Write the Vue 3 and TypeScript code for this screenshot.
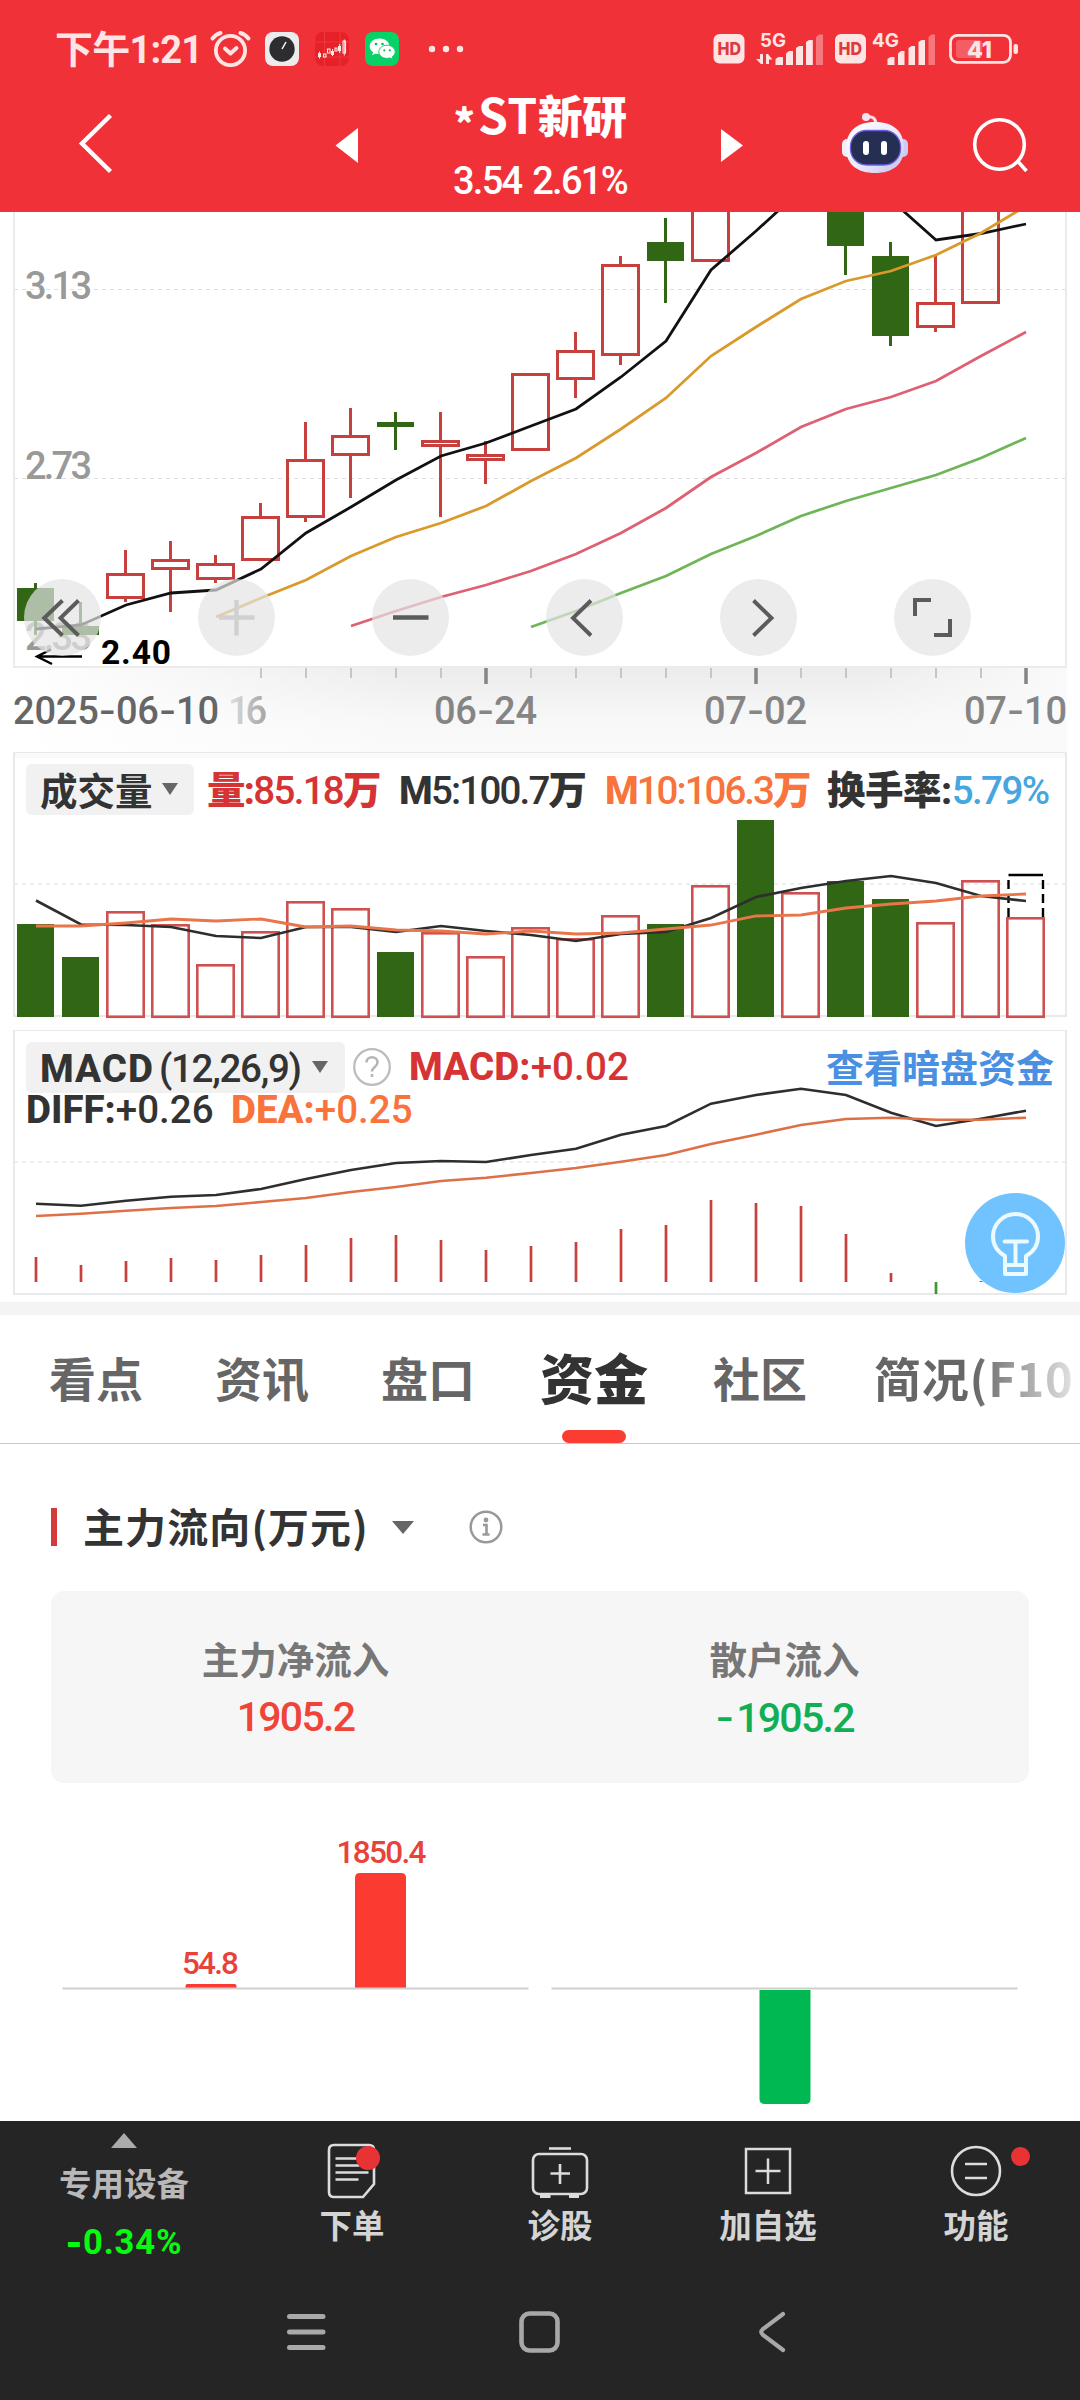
<script setup lang="ts">
interface Candle { i: number; up: boolean; high: number; top: number; bottom: number; low: number }
interface Label { t: string; x: number; y: number; w: number; fill: string }

const cx = (i: number): number => 35.5 + 45 * i
const line = (ys: number[], from = 0): string =>
  ys.map((y, k) => `${cx(from + k) + 0.5},${y}`).join(' ')
const parts = (t: string): string[] => t.split(/([-+])/).filter((p) => p.length > 0)

const candleRows: [number, number, number, number, number, number][] = [
  [0, 0, 583, 588, 621, 635], [1, 0, 602, 626, 635, 635], [2, 1, 550, 573, 599, 602],
  [3, 1, 541, 559, 570, 612], [4, 1, 555, 563, 580, 583], [5, 1, 503, 516, 561, 561],
  [6, 1, 422, 459, 518, 522], [7, 1, 408, 435, 456, 498], [8, 0, 412, 422, 427, 450],
  [9, 1, 412, 440, 447, 517], [10, 1, 441, 454, 461, 484], [11, 1, 373, 373, 451, 451],
  [12, 1, 332, 350, 380, 398], [13, 1, 256, 264, 356, 365], [14, 0, 218, 242, 261, 303],
  [15, 1, 200, 200, 262, 262], [18, 0, 200, 200, 246, 275], [19, 0, 242, 256, 336, 346],
  [20, 1, 256, 302, 328, 332], [21, 1, 200, 200, 304, 304],
]
const candles: Candle[] = candleRows.map(([i, up, high, top, bottom, low]) => ({ i, up: up === 1, high, top, bottom, low }))

const priceLines = [
  { color: '#111111', pts: line([629, 625, 605, 593, 590, 569, 533, 507, 480, 456, 443, 426, 409, 377, 341, 270, 231, 190, 170, 200, 240, 233.5, 224]) },
  { color: '#d99a2b', pts: line([617, 598, 580, 556, 537, 523, 506, 481, 458, 429, 398, 356, 327, 299, 281, 271, 255, 233, 206], 4) },
  { color: '#dd6173', pts: line([626, 611, 597, 585, 571, 554, 533, 508, 477, 453, 427, 409, 397, 381, 356, 332], 7) },
  { color: '#6fb557', pts: line([627, 611, 593, 576, 554, 536, 516, 501, 488, 475, 458, 438], 11) },
]
const minorTicks: number[] = Array.from({ length: 17 }, (_, k) => k + 5).filter((i) => i !== 10 && i !== 16)
const majorTicks: number[] = [10, 16, 22]
const priceLabels: Label[] = [
  { t: '3.13', x: 25, y: 299, w: 67, fill: '#999' },
  { t: '2.73', x: 25, y: 479, w: 67, fill: '#999' },
  { t: '2.33', x: 25, y: 650, w: 67, fill: '#999' },
]
const dates: Label[] = [
  { t: '2025-06-10', x: 13, y: 724, w: 206, fill: '#666' },
  { t: '16', x: 228, y: 724, w: 39, fill: 'url(#fadeDate)' },
  { t: '06-24', x: 434, y: 724, w: 103, fill: '#858585' },
  { t: '07-02', x: 704, y: 724, w: 103, fill: '#858585' },
  { t: '07-10', x: 964, y: 724, w: 103, fill: '#858585' },
]

const volTops: number[] = [924, 957, 911, 924, 964, 931, 901, 908, 952, 932, 956, 927, 938, 915, 924, 885, 820, 892, 881, 899, 922, 880, 917]
const downDays = new Set<number>([0, 1, 8, 14, 16, 18, 19])
const volBars = volTops.map((top, i) => ({ i, top, up: !downDays.has(i) }))
const volMa5 = line([900.5, 924.5, 925, 927, 936, 938, 927, 927, 932, 926, 931, 935, 941, 934, 932, 918, 897, 888, 881, 876, 883, 896, 901])
const volMa10 = line([926, 926, 923, 919, 921, 919, 927, 926, 930, 931, 934, 931, 934, 933, 929, 925, 916, 915, 908, 904, 901, 896, 894])

const diff = line([1203.7, 1205.7, 1200.7, 1196.7, 1195, 1189, 1179, 1170, 1163, 1161, 1162, 1155, 1148.7, 1134.7, 1126, 1103.7, 1095, 1088.7, 1095, 1112.7, 1126, 1118.7, 1110.7])
const dea = line([1216, 1213.7, 1210.7, 1208, 1206, 1202, 1198, 1192, 1187, 1181, 1177.7, 1173, 1168, 1161.7, 1155, 1144, 1134.7, 1125, 1119, 1117.7, 1119.7, 1119.7, 1117.7])
const macd: number[] = [1257, 1265, 1261, 1258, 1260, 1255, 1245, 1238, 1235, 1240, 1250, 1246, 1242, 1229, 1225, 1200, 1203, 1206, 1234, 1273, 1294, 1281, 1275]

const tabs = [
  { name: '看点', on: false }, { name: '资讯', on: false }, { name: '盘口', on: false },
  { name: '资金', on: true }, { name: '社区', on: false }, { name: '简况(F10', on: false },
]
</script>

<template>
  <div class="page">
    <header class="top">
      <div class="status">
        <span class="clock">下午1:21</span>
        <svg class="left-icons" width="270" height="80" viewBox="204 0 270 80">
          <g fill="none" stroke="#ffe4e4" stroke-linecap="round">
            <circle cx="230.500" cy="50.500" r="14.600" stroke-width="3.800" />
            <path d="M225 48.500l5.500 5 6-5.500" stroke-width="4" stroke-linejoin="round" />
            <path d="M212.500 38.500q3-4 8-5.500M248.500 38.500q-3-4-8-5.500" stroke-width="4" />
          </g>
          <rect x="265" y="32" width="34" height="34" rx="8" fill="#ececec" />
          <circle cx="282" cy="49" r="12.700" fill="#2d2d30" />
          <path d="M282 49l4-7" stroke="#fff" stroke-width="1.500" />
          <rect x="315" y="32" width="34" height="34" rx="8" fill="#e62228" />
          <path d="M324.500 32v34M340 32v34M315 42h34M315 57h34" stroke="#f04a4c" stroke-width=".6" />
          <g fill="#ffe8e8">
            <path d="M318 53h3v4h-3zM331 51h3v4h-3zM338 46h3v5h-3z" />
            <path d="M323.500 54h2.500v3h-2.500zM327.500 49h2.500v4h-2.500zM335 48h2v3h-2zM343 41h2.500v12H343z" fill="none" stroke="#ffe8e8" stroke-width="1.100" />
            <path d="M319 51.500h1v7h-1zM332 49h1v7h-1zM339.200 44h1v9h-1zM343.800 39.500h1v16h-1z" />
          </g>
          <rect x="365" y="32" width="34" height="34" rx="8" fill="#08d168" />
          <path d="M379.500 38.500c-5.600 0-9.800 3.500-9.800 7.800 0 2.500 1.400 4.600 3.400 6l-1 3 3.600-1.800c1.200.4 2.500.6 3.800.6 5.600 0 9.900-3.300 9.900-7.800s-4.300-7.800-9.900-7.800z" fill="#fff" />
          <path d="M387 45.200c-4.500 0-8.200 2.900-8.200 6.600s3.700 6.600 8.200 6.600c1 0 2-.2 3-.5l3 1.600-.8-2.600c1.800-1.200 3-3 3-5.100 0-3.700-3.700-6.600-8.200-6.600z" fill="#fff" stroke="#08d168" stroke-width="1" />
          <g fill="#08b75c"><circle cx="376" cy="44" r="1.300" /><circle cx="382.500" cy="44" r="1.300" /><circle cx="384.300" cy="50.300" r="1.100" /><circle cx="389.800" cy="50.300" r="1.100" /></g>
          <g fill="#ffe4e4"><circle cx="432" cy="49" r="3.200" /><circle cx="446" cy="49" r="3.200" /><circle cx="460" cy="49" r="3.200" /></g>
        </svg>
        <svg class="right-icons" width="320" height="80" viewBox="704 0 320 80" font-family="Inter, sans-serif" font-weight="700">
          <g fill="#ffe4e4">
            <rect x="713.500" y="34" width="31" height="29.500" rx="6" />
            <rect x="835" y="34" width="31" height="29.500" rx="6" />
            <text x="760" y="47" font-size="19" textLength="26" lengthAdjust="spacingAndGlyphs">5G</text>
            <text x="872" y="47" font-size="19" textLength="27" lengthAdjust="spacingAndGlyphs">4G</text>
            <path d="M760 54h3v10h-2l-5-5h4zM766 54h2l4.500 5.500H769V64h-3z" />
            <path d="M775.500 59l3-2h4.500v8h-7.500zM786 53.500l3-2.500h4v14h-7zM796 48l3-2h4v19h-7zM806 42l3-2h3.800v25H806z" />
            <path d="M887.500 59l3-2h4v8h-7zM898 53.500l3-2.500h3.500v14H898zM908.500 48l3-2h3.500v19h-6.500zM918.500 42l3-2h3.500v25h-6.500z" />
            <path d="M816 37l3-2.500h4V65h-7zM928.500 37l3-2.500h3.500V65h-6.500z" opacity=".4" />
            <rect x="956" y="40" width="26" height="18" rx="3" opacity=".25" />
            <rect x="1013.500" y="44" width="4.500" height="10" rx="2" />
            <text x="967" y="57.500" font-size="23" font-weight="800" textLength="25" lengthAdjust="spacingAndGlyphs">41</text>
          </g>
          <rect x="950.500" y="35.300" width="60" height="27" rx="7" fill="none" stroke="#ffe4e4" stroke-width="2.800" />
          <g fill="#dd3b40" font-size="17" font-weight="800"><text x="717.500" y="55" textLength="23.500" lengthAdjust="spacingAndGlyphs">HD</text><text x="838.500" y="55" textLength="23.500" lengthAdjust="spacingAndGlyphs">HD</text></g>
        </svg>
      </div>
      <div class="title-row">
        <svg width="80" height="132" viewBox="60 80 80 132"><path d="M110.500 115.500L82 143.500l28.500 28" fill="none" stroke="#fff" stroke-width="4.400" /></svg>
        <svg width="50" height="132" viewBox="325 80 50 132"><path d="M335.500 145.500L358 128v35z" fill="#fff" /></svg>
        <div class="title">
          <h1><span class="star">*</span><span class="latin">ST</span>新研</h1>
          <p>3.54 2.61%</p>
        </div>
        <svg width="50" height="132" viewBox="705 80 50 132"><path d="M743 145.500L721 129v33z" fill="#fff" /></svg>
        <svg width="80" height="132" viewBox="835 80 80 132">
          <defs><linearGradient id="shell" x1="0" y1="0" x2="1" y2="1"><stop offset="0" stop-color="#ffffff" /><stop offset=".55" stop-color="#ece9fb" /><stop offset="1" stop-color="#bfc0ee" /></linearGradient></defs>
          <path d="M866 117q10-2 10 8" fill="none" stroke="#f5dfee" stroke-width="3" /><circle cx="866" cy="117" r="4" fill="#f3e4f4" />
          <rect x="842" y="139" width="10" height="18" rx="5" fill="#eeeefc" /><rect x="898" y="139" width="10" height="18" rx="5" fill="#c9cdf5" />
          <path d="M875 122c19 0 29 10 29 26 0 17-12 25-29 25s-29-8-29-25c0-16 10-26 29-26z" fill="url(#shell)" />
          <rect x="850.500" y="130.500" width="50" height="34.500" rx="16" fill="#252f54" stroke="#6e5fe0" stroke-width="1.300" />
          <rect x="863" y="141" width="6" height="14" rx="3" fill="#fff" /><rect x="881" y="141" width="6" height="14" rx="3" fill="#fff" />
        </svg>
        <svg width="70" height="132" viewBox="965 80 70 132"><g fill="none" stroke="#fff" stroke-width="3.600"><circle cx="999.500" cy="144.500" r="24.800" /><path d="M1017 160.500l9.500 10.500" /></g></svg>
      </div>
    </header>

    <section class="price">
      <svg width="1080" height="540" viewBox="0 212 1080 540">
        <defs>
          <linearGradient id="axis" x1="0" y1="0" x2="0" y2="1"><stop offset="0" stop-color="#ececec" /><stop offset=".65" stop-color="#f8f8f8" /><stop offset="1" stop-color="#fafafa" /></linearGradient>
          <linearGradient id="axisFade" x1="0" y1="0" x2="1" y2="0"><stop offset="0" stop-color="#fff" /><stop offset="1" stop-color="#fff" stop-opacity="0" /></linearGradient>
          <linearGradient id="axisFadeRight" x1="0" y1="0" x2="1" y2="0"><stop offset="0" stop-color="#fafafa" stop-opacity="0" /><stop offset="1" stop-color="#fafafa" /></linearGradient>
          <linearGradient id="fadeDate" x1="0" y1="0" x2="1" y2="0"><stop offset="0" stop-color="#e0e0e0" /><stop offset="1" stop-color="#a4a4a4" /></linearGradient>
        </defs>
        <rect x="15" y="668" width="1052" height="84" fill="url(#axis)" />
        <rect x="13" y="668" width="400" height="84" fill="url(#axisFade)" />
        <rect x="867" y="668" width="200" height="84" fill="url(#axisFadeRight)" />
        <path d="M14 289.500h1052M14 478.500h1052" stroke="#dedede" stroke-width="1.200" stroke-dasharray="4 4" />
        <path d="M14 212v455h1052V212" fill="none" stroke="#ebebeb" stroke-width="2" />
        <g font-family="Roboto, sans-serif" font-size="38" font-weight="500">
          <text v-for="l in priceLabels" :key="l.t" :x="l.x" :y="l.y" :fill="l.fill" :textLength="l.w">{{ l.t }}</text>
          <text v-for="l in dates" :key="l.t" :x="l.x" :y="l.y" :fill="l.fill" :textLength="l.w"><tspan v-for="(p, k) in parts(l.t)" :key="k" :class="{ dash: p === '-' }">{{ p }}</tspan></text>
        </g>
        <g v-for="c in candles" :key="c.i">
          <template v-if="c.up">
            <path :d="`M${cx(c.i)} ${c.high}V${c.top}M${cx(c.i)} ${c.bottom}V${c.low}`" stroke="#c8403e" stroke-width="3" />
            <rect :x="cx(c.i) - 18" :y="c.top + 1.5" width="36" :height="c.bottom - c.top - 3" fill="none" stroke="#c8403e" stroke-width="3" />
          </template>
          <template v-else>
            <path :d="`M${cx(c.i)} ${c.high}V${c.low}`" stroke="#316615" stroke-width="3" />
            <rect :x="cx(c.i) - 18.5" :y="c.top" width="37" :height="c.bottom - c.top" fill="#316615" />
          </template>
        </g>
        <polyline v-for="l in priceLines" :key="l.color" :points="l.pts" fill="none" :stroke="l.color" stroke-width="2.800" />
        <path d="M82 656.500H37M51 649.500l-14 7 15 7.500" fill="none" stroke="#000" stroke-width="2.400" />
        <text x="101" y="664" font-family="Roboto, sans-serif" font-size="33.500" font-weight="700" textLength="70">2.40</text>
        <path v-for="i in minorTicks" :key="i" :d="`M${cx(i) + 0.5} 668v10`" stroke="#c6c6c6" stroke-width="2" />
        <path v-for="i in majorTicks" :key="i" :d="`M${cx(i) + 0.5} 668v16`" stroke="#858585" stroke-width="3.500" />
      </svg>
      <div class="tools">
        <button><svg viewBox="24 579 77 77"><path d="M62.500 600.500l-18.300 17.500 18.300 17.500M78.500 600.500L60.500 618l18 17.500" /></svg></button>
        <button class="off"><svg viewBox="198 579 77 77"><path d="M219 617.500h35.500M236.500 600v35.500" /></svg></button>
        <button><svg viewBox="372 579 77 77"><path d="M393 617.500h35.500" stroke-width="4.500" /></svg></button>
        <button><svg viewBox="546 579 77 77"><path d="M591 600.500L573 618l18 17.500" /></svg></button>
        <button><svg viewBox="720 579 77 77"><path d="M753.500 600.500l18 17.500-18 17.500" /></svg></button>
        <button><svg viewBox="894 579 77 77"><path d="M915 616v-16h16M934 635h16v-16" stroke-width="4" /></svg></button>
      </div>
    </section>

    <section class="panel vol">
      <svg class="plot" width="1080" height="278" viewBox="0 752 1080 278">
        <rect x="15" y="752" width="1052" height="6" fill="#fafafa" />
        <path d="M14 884h1052" stroke="#e9e9e9" stroke-width="1.700" stroke-dasharray="4 4" />
        <rect x="14" y="752" width="1052" height="264" fill="none" stroke="#e9e9e9" stroke-width="2" />
        <g v-for="b in volBars" :key="b.i">
          <rect v-if="b.up" :x="cx(b.i) - 18.2" :y="b.top + 1.3" width="36.400" :height="1015.5 - b.top" fill="none" stroke="#cf5050" stroke-width="2.600" />
          <rect v-else :x="cx(b.i) - 18.5" :y="b.top" width="37" :height="1017 - b.top" fill="#316615" />
        </g>
        <path d="M1008.500 917v-42M1043 917v-42" fill="none" stroke="#000" stroke-width="2.400" stroke-dasharray="9 5" />
        <path d="M1008.500 875H1043" stroke="#000" stroke-width="2.400" />
        <polyline :points="volMa5" fill="none" stroke="#2e2e2e" stroke-width="2.600" />
        <polyline :points="volMa10" fill="none" stroke="#e9764a" stroke-width="2.800" />
      </svg>
      <div class="legend">
        <span class="pill cn p1">成交量<i class="caret"></i></span>
        <span class="v1 red"><b>量:</b>85.18<b>万</b></span>
        <span class="v2"><b>M</b>5:100.7<b>万</b></span>
        <span class="v3 orange"><b>M</b>10:106.3<b>万</b></span>
        <span class="v4"><b>换手率:</b><em>5.79%</em></span>
      </div>
    </section>

    <section class="panel macd">
      <svg class="plot" width="1080" height="272" viewBox="0 1030 1080 272">
        <path d="M14 1162h1052" stroke="#e9e9e9" stroke-width="1.700" stroke-dasharray="4 4" />
        <rect x="14" y="1030" width="1052" height="264" fill="none" stroke="#e9e9e9" stroke-width="2" />
        <path v-for="(y, i) in macd" :key="i" :d="`M${cx(i) + 0.5} 1282V${y}`" :stroke="i === 20 ? '#3c9a32' : '#c8403e'" stroke-width="2.700" />
        <polyline :points="diff" fill="none" stroke="#2e2e2e" stroke-width="2.600" />
        <polyline :points="dea" fill="none" stroke="#de7048" stroke-width="2.600" />
      </svg>
      <div class="legend">
        <span class="pill p2"><b>MACD</b><span class="args">(12,26,9)</span><i class="caret"></i></span>
        <svg class="help" width="40" height="40" viewBox="0 0 40 40"><circle cx="20" cy="20" r="17.800" fill="none" stroke="#bdbdbd" stroke-width="2.300" /><path d="M14.500 15.500c0-7 11-7 11 0 0 4.500-5.500 4.500-5.500 9M20 27v3" fill="none" stroke="#b5b5b5" stroke-width="2.500" /></svg>
        <span class="m1 red"><b>MACD:</b>+0.02</span>
        <a class="dark">查看暗盘资金</a>
      </div>
      <div class="legend second">
        <span class="d1"><b>DIFF:</b>+0.26</span>
        <span class="d2 orange"><b>DEA:</b>+0.25</span>
      </div>
      <svg class="bulb" width="100" height="100" viewBox="965 1193 100 100">
        <circle cx="1015" cy="1243" r="50" fill="#6ec2ff" />
        <g fill="none" stroke="#eafaff" stroke-width="4" stroke-linejoin="round" stroke-linecap="round">
          <path d="M1005 1274v-18q-12-7-12-19.500a22.500 22.500 0 0 1 45 0q0 12.500-12 19.500v18z" /><path d="M1004.500 1241.500h22.500M1015.500 1241.500v23M1005 1265h21" />
        </g>
      </svg>
    </section>

    <div class="divider"></div>
    <nav class="tabs"><span v-for="t in tabs" :key="t.name" :class="{ on: t.on }">{{ t.name }}</span></nav>

    <main class="flow">
      <div class="heading">
        <i class="mark"></i><h2>主力流向(万元)</h2><i class="caret big"></i>
        <svg width="36" height="36" viewBox="0 0 36 36"><circle cx="18" cy="18" r="15.300" fill="none" stroke="#999" stroke-width="2.500" /><circle cx="18" cy="11" r="2.400" fill="#999" /><path d="M15 16h3.500v9.500M14.500 25.500h7" fill="none" stroke="#999" stroke-width="2.600" /></svg>
      </div>
      <div class="card">
        <div><span>主力净流入</span><strong class="up">1905.2</strong></div>
        <div><span>散户流入</span><strong class="down"><span class="dash">-</span>1905.2</strong></div>
      </div>
      <svg class="bars" width="1080" height="338" viewBox="0 1783 1080 338" font-family="Roboto, sans-serif" font-size="31.500" font-weight="500" fill="#e8433a">
        <text x="336.500" y="1863" textLength="90">1850.4</text>
        <text x="182" y="1974" textLength="57">54.8</text>
        <path d="M355 1988v-110q0-5 5-5h41q5 0 5 5v110zM185.500 1988v-2q0-2 2-2h47q2 0 2 2v2z" fill="#fb3b31" />
        <path d="M62.500 1988.500h466M551.500 1988.500h466" stroke="#cfcfcf" stroke-width="2" />
        <path d="M759.500 1990h51v109q0 5-5 5h-41q-5 0-5-5z" fill="#00b852" />
      </svg>
    </main>

    <footer>
      <div class="actions">
        <div class="sector">
          <i class="tri"></i><span>专用设备</span><strong><b class="dash">-</b>0.34%</strong>
        </div>
        <div class="act">
          <svg width="80" height="70" viewBox="312 2136 80 70"><g fill="none" stroke="#dcdcdc" stroke-width="2.600"><path d="M334 2145h35q5 0 5 5v34l-11 13h-29q-5 0-5-5v-42q0-5 5-5z" /><path d="M335.500 2158.500h22M335.500 2165.500h24M335.500 2172.500h33M335.500 2179.500h23" /></g><circle cx="368" cy="2158" r="12" fill="#e83334" /></svg>
          <span>下单</span>
        </div>
        <div class="act">
          <svg width="80" height="70" viewBox="520 2136 80 70"><g fill="none" stroke="#dcdcdc" stroke-width="2.600"><rect x="533" y="2154" width="54" height="40" rx="6" /><path d="M549 2148.500h22" /><path d="M540 2196h10.500M569 2196h10" stroke-width="4" /><path d="M560 2164v20M550.500 2173.500h19.500" /></g></svg>
          <span>诊股</span>
        </div>
        <div class="act">
          <svg width="80" height="70" viewBox="728 2136 80 70"><g fill="none" stroke="#dcdcdc" stroke-width="2.500"><rect x="746" y="2149" width="44" height="44" /><path d="M768 2158.500v25.500M755.500 2171h25" /></g></svg>
          <span>加自选</span>
        </div>
        <div class="act">
          <svg width="92" height="70" viewBox="930 2136 92 70"><g fill="none" stroke="#dcdcdc" stroke-width="2.600"><circle cx="976" cy="2171" r="24" /><path d="M965 2164h22M965 2178h22" /></g></svg>
          <span>功能</span><i class="dot"></i>
        </div>
      </div>
      <svg class="sysnav" width="1080" height="136" viewBox="0 2264 1080 136"><g fill="none" stroke="#a8a8a8" stroke-linecap="round" stroke-linejoin="round"><path d="M289.500 2316.500h33.500M289.500 2332h33.500M289.500 2347.500h33.500" stroke-width="5" /><rect x="521.500" y="2313.500" width="36" height="37" rx="8" stroke-width="4.600" /><path d="M783 2314l-20 15q-3.500 3 0 6l20 15" stroke-width="4.200" /></g></svg>
    </footer>
  </div>
</template>

<style>
body { background: #fff; }
</style>

<style scoped>
.page { width: 1080px; height: 2400px; overflow: hidden; background: #fff; color: #333; font-family: Roboto, "Noto Sans CJK SC", sans-serif; display: flex; flex-direction: column; }
.page > * { flex: none; }
.top { height: 212px; background: #f13138; color: #fff; }
.status { height: 80px; display: flex; padding-left: 55px; }
.clock { width: 149px; font: 700 38px/100px Roboto, "Noto Sans CJK SC", sans-serif; color: #ffe4e4; white-space: nowrap; letter-spacing: -.8px; }
.right-icons { margin-left: 230px; }
.title-row { height: 132px; display: flex; }
.title-row > svg:nth-of-type(1) { margin-left: 60px; }
.title-row > svg:nth-of-type(2) { margin-left: 185px; }
.title { width: 330px; text-align: center; }
.title h1 { margin: 6px 0 0; font: 900 45px/54px "Noto Sans CJK SC", sans-serif; letter-spacing: -.8px; white-space: nowrap; }
.star { font-size: 40px; position: relative; top: 5px; letter-spacing: 3px; }
.latin { font-weight: 700; font-size: 48px; letter-spacing: .5px; }
.title p { margin: 17px 0 0; font-size: 38px; line-height: 40px; font-weight: 500; letter-spacing: -1.7px; word-spacing: 3px; }
.title-row > svg:nth-of-type(4) { margin-left: 80px; }
.title-row > svg:nth-of-type(5) { margin-left: 50px; }

.price { height: 540px; position: relative; }
.price > svg, .plot { display: block; }
.dash { font-family: Inter, sans-serif; }
.tools { position: absolute; left: 24px; top: 367px; display: flex; gap: 97px; }
.tools button { width: 77px; height: 77px; padding: 0; border: 0; border-radius: 50%; background: rgba(228, 228, 228, .7); }
.tools svg { display: block; width: 77px; height: 77px; fill: none; stroke: #5b5b5b; stroke-width: 3.9; }
.tools .off svg { stroke: #d0d0d0; stroke-width: 4.4; }

.panel { position: relative; }
.vol { height: 278px; }
.macd { height: 272px; }
.plot { position: absolute; left: 0; top: 0; }
.legend { position: relative; display: flex; padding: 12px 0 0 26px; height: 51px; line-height: 54px; font-size: 38.5px; font-weight: 500; white-space: nowrap; color: #333; }
.legend b { font-weight: 800; }
.legend > * { flex: none; box-sizing: border-box; }
.pill { display: flex; align-items: center; height: 51px; padding-left: 14px; border-radius: 6px; background: #f1f1f1; line-height: 51px; }
.cn { font-family: "Noto Sans CJK SC", sans-serif; font-weight: 700; font-size: 37.5px; }
.cn.p1 { line-height: 49px; padding-bottom: 2px; }
.p1 { width: 168px; }
.p2 { width: 319px; padding-top: 2px; }
.p2 b { width: 119px; letter-spacing: 1px; }
.args { width: 153px; letter-spacing: -1.3px; }
.caret { width: 0; height: 0; border: 8.5px solid transparent; border-top: 12px solid #666; border-bottom: 0; margin-left: 9px; }
.p2 .caret { margin: -3px 0 0; }
.red { color: #d63334; }
.orange { color: #f9733d; }
.v1 { margin-left: 13px; width: 192px; letter-spacing: -1.7px; }
.v2 { width: 206px; letter-spacing: -1.8px; }
.v3 { width: 222px; letter-spacing: -2px; }
.v4 { letter-spacing: -.5px; }
.v4 em { font-style: normal; color: #45a6e0; letter-spacing: -1.6px; }
.help { margin: 5px 0 0 7px; }
.m1 { margin-left: 17px; width: 417px; line-height: 50px; letter-spacing: .1px; }
.dark { font: 700 38px/48px "Noto Sans CJK SC", sans-serif; color: #4a90e2; }
.second { padding-top: 0; height: 40px; line-height: 33px; }
.d1 { width: 205px; }
.bulb { position: absolute; left: 965px; top: 163px; opacity: .98; }

.divider { height: 13px; background: #f4f4f4; }
.tabs { box-sizing: border-box; height: 129px; padding-left: 48px; border-bottom: 1.5px solid #c8c8c8; display: flex; gap: 70px; overflow: hidden; font: 700 47px/124px "Noto Sans CJK SC", sans-serif; color: #666; white-space: nowrap; }
.tabs span { flex: none; width: 96px; text-align: center; position: relative; }
.tabs .on { color: #333; font-weight: 900; font-size: 54px; margin: 0 -6px; width: 108px; }
.tabs .on::after { content: ""; position: absolute; left: 22px; bottom: 0; width: 64px; height: 13px; border-radius: 7px; background: #fa3c32; }
.tabs span:last-child { width: 206px; margin-left: -4px; text-align: left; letter-spacing: .8px; background: linear-gradient(90deg, #666 48%, #fff 108%); background-clip: text; color: transparent; }

.flow { height: 677px; }
.heading { height: 147px; box-sizing: border-box; padding: 19px 0 0 51px; display: flex; align-items: center; }
.mark { width: 6px; height: 38px; background: #d43a3a; }
.heading h2 { margin: 0 0 4px 26px; width: 282px; font: 700 41px/60px "Noto Sans CJK SC", sans-serif; letter-spacing: 1.1px; white-space: nowrap; }
.caret.big { border-left-width: 11px; border-right-width: 11px; border-top-width: 13px; margin-left: 27px; }
.heading svg { margin-left: 54px; }
.card { margin: 0 51px; height: 192px; border-radius: 13px; background: #f6f6f6; display: flex; }
.card div { flex: 1; display: flex; flex-direction: column; align-items: center; padding-top: 42px; font: 700 37.5px/50px "Noto Sans CJK SC", sans-serif; color: #777; }
.card strong { margin-top: 10px; font: 500 41px/48px Roboto, sans-serif; letter-spacing: -1.7px; }
.card .dash { letter-spacing: 2px; }
.up { color: #f0443a; }
.down { color: #10ae55; }
.bars { display: block; }

footer { height: 279px; background: #252525; }
.actions { height: 143px; display: flex; color: #d4d4d4; font: 700 32.5px/40px "Noto Sans CJK SC", sans-serif; }
.sector { width: 248px; display: flex; flex-direction: column; align-items: center; color: #b8b8b8; }
.tri { margin-top: 12px; border: 13px solid transparent; border-bottom: 15px solid #ababab; border-top: 0; }
.sector span { margin-top: 14px; }
.sector strong { margin-top: 20px; font: 700 34.5px/40px Roboto, sans-serif; letter-spacing: .9px; color: #08fa12; }
.act { width: 208px; display: flex; flex-direction: column; align-items: center; padding-top: 15px; position: relative; }
.act span { margin-top: -2px; }
.dot { position: absolute; left: 139px; top: 26px; width: 19px; height: 19px; border-radius: 50%; background: #e83334; }
.sysnav { display: block; }
</style>
